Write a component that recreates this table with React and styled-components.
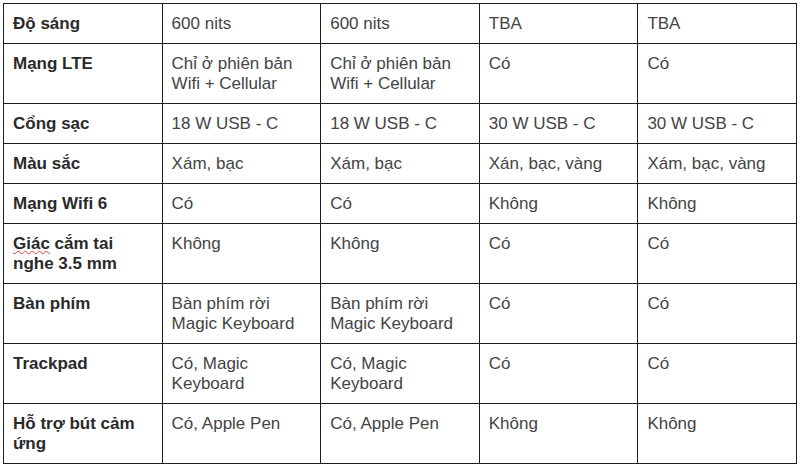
import React from 'react'
import styled, { createGlobalStyle } from 'styled-components'

const GlobalStyle = createGlobalStyle`
    body {
        margin: 0;
        background: #fff;
        font-family: 'Liberation Sans', Arial, sans-serif;
    }
`

const rows = [
    ['Độ sáng', '600 nits', '600 nits', 'TBA', 'TBA'],
    [
        'Mạng LTE',
        'Chỉ ở phiên bản Wifi + Cellular',
        'Chỉ ở phiên bản Wifi + Cellular',
        'Có',
        'Có'
    ],
    ['Cổng sạc', '18 W USB - C', '18 W USB - C', '30 W USB - C', '30 W USB - C'],
    ['Màu sắc', 'Xám, bạc', 'Xám, bạc', 'Xán, bạc, vàng', 'Xám, bạc, vàng'],
    ['Mạng Wifi 6', 'Có', 'Có', 'Không', 'Không'],
    ['spell', 'Không', 'Không', 'Có', 'Có'],
    [
        'Bàn phím',
        'Bàn phím rời Magic Keyboard',
        'Bàn phím rời Magic Keyboard',
        'Có',
        'Có'
    ],
    ['Trackpad', 'Có, Magic Keyboard', 'Có, Magic Keyboard', 'Có', 'Có'],
    ['Hỗ trợ bút cảm ứng', 'Có, Apple Pen', 'Có, Apple Pen', 'Không', 'Không']
]

const App = () => {
    return (
        <Wrapper>
            <GlobalStyle />
            <Table>
                <colgroup>
                    {[0, 1, 2, 3, 4].map((i) => (
                        <col key={i} />
                    ))}
                </colgroup>
                <tbody>
                    {rows.map((row, r) => (
                        <tr key={r}>
                            {row.map((cell, c) => (
                                <Cell key={c} $head={c === 0}>
                                    {cell === 'spell' ? (
                                        <>
                                            <Typo>Giác</Typo> cắm tai nghe 3.5 mm
                                        </>
                                    ) : (
                                        cell
                                    )}
                                </Cell>
                            ))}
                        </tr>
                    ))}
                </tbody>
            </Table>
        </Wrapper>
    )
}

const Wrapper = styled.div`
    padding: 3px 0 0 3px;
`

const Table = styled.table`
    width: 794px;
    table-layout: fixed;
    border-collapse: collapse;

    col {
        width: 20%;
    }
`

const Cell = styled.td`
    border: 1px solid #1e1e1e;
    padding: 10px 9px 9px 9px;
    vertical-align: top;
    font-size: 17px;
    line-height: 20px;
    font-weight: ${(p) => (p.$head ? 700 : 400)};
    color: ${(p) => (p.$head ? '#2a2a2a' : '#444')};
`

const Typo = styled.span`
    text-decoration: underline wavy #e53935;
    text-decoration-thickness: 1px;
    text-underline-offset: 1px;
`

export default App
